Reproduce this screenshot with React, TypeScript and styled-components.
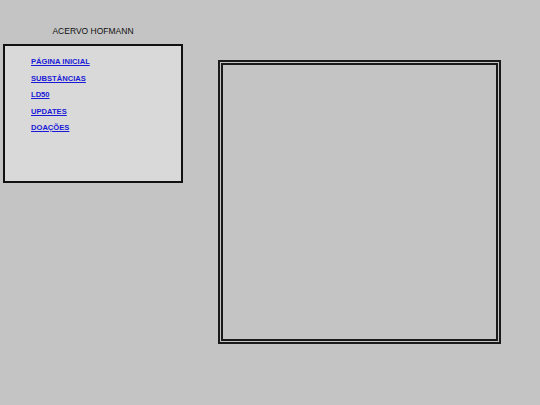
import styled, { createGlobalStyle } from "styled-components";

const GlobalStyle = createGlobalStyle`
  html, body {
    margin: 0;
    padding: 0;
    background: #c4c4c4;
    font-family: "Liberation Sans", Arial, sans-serif;
  }
`;

const Page = styled.div`
  display: flex;
  align-items: flex-start;
  width: 540px;
  height: 405px;
  background: #c4c4c4;
`;

const Sidebar = styled.aside`
  display: flex;
  flex-direction: column;
  margin: 26px 0 0 3px;
  width: 180px;
`;

const Title = styled.h1`
  margin: 0 0 8px;
  font-size: 8.5px;
  font-weight: 400;
  line-height: 10px;
  text-align: center;
  color: #111;
`;

const Menu = styled.nav`
  box-sizing: border-box;
  height: 139px;
  border: 2px solid #111;
  background: #d9d9d9;
  padding: 11px 0 0 26px;
  display: flex;
  flex-direction: column;
  gap: 6.5px;
`;

const MenuLink = styled.a`
  font-size: 7.6px;
  line-height: 10px;
  font-weight: 700;
  color: #1a1ad6;
  text-decoration: underline;
`;

const Frame = styled.section`
  box-sizing: border-box;
  margin: 60px 0 0 35px;
  width: 283px;
  height: 284px;
  border: 5px double #1a1a1a;
`;

const links = ["PÁGINA INICIAL", "SUBSTÂNCIAS", "LD50", "UPDATES", "DOAÇÕES"];

export default function App() {
  return (
    <>
      <GlobalStyle />
      <Page>
        <Sidebar>
          <Title>ACERVO HOFMANN</Title>
          <Menu>
            {links.map((label) => (
              <MenuLink href="#" key={label}>
                {label}
              </MenuLink>
            ))}
          </Menu>
        </Sidebar>
        <Frame />
      </Page>
    </>
  );
}
